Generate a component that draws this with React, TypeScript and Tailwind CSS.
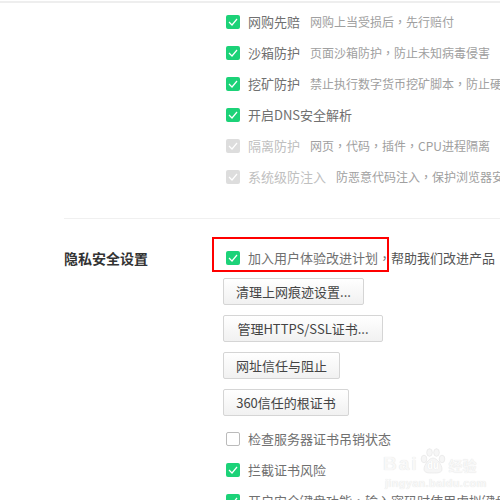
import type { ReactNode } from "react"

const FONT = "[font-family:'Noto_Sans_CJK_SC','Liberation_Sans',sans-serif]"

// the full-width comma sits centred in the reference, which the TC cut does
function Commas({ text }: { text: string }) {
  const parts = text.split("，")
  return (
    <>
      {parts.map((part, i) => (
        <span key={i}>
          {part}
          {i < parts.length - 1 && <span className="font-['Noto_Sans_CJK_TC']">，</span>}
        </span>
      ))}
    </>
  )
}

function Check({ state }: { state: "on" | "off" | "locked" }) {
  if (state === "off") {
    return <span className="h-[14px] w-[14px] shrink-0 rounded-[2px] border border-[#bbbbbb] bg-white" />
  }
  return (
    <span
      className={`flex h-[14px] w-[14px] shrink-0 items-center justify-center rounded-[2px] ${
        state === "on" ? "bg-[#1cd278]" : "bg-[#dddddd]"
      }`}
    >
      <svg width="10" height="8" viewBox="0 0 10 8" fill="none">
        <path d="M1 4l3 3 5-6" stroke="white" strokeWidth="1.2" />
      </svg>
    </span>
  )
}

function Option({
  state = "on",
  label,
  note,
}: {
  state?: "on" | "off" | "locked"
  label: string
  note?: string
}) {
  const locked = state === "locked"
  return (
    <div className="mb-px flex h-[30px] items-center whitespace-nowrap">
      <Check state={state} />
      <span className={`ml-2 ${locked ? "text-[#c0c0c0]" : "text-[#707070]"}`}>
        <Commas text={label} />
      </span>
      {note && (
        <span className="ml-[10px] text-[12px] text-[#a0a0a0]">
          <Commas text={note} />
        </span>
      )}
    </div>
  )
}

function ActionButton({ width, children }: { width: string; children: ReactNode }) {
  return (
    <button
      className={`-ml-[3px] mb-[10px] block h-[27px] rounded-[2px] border border-[#d5d5d5] bg-gradient-to-b from-white to-[#f1f1f1] text-center text-[#444444] ${width}`}
    >
      {children}
    </button>
  )
}

function Watermark() {
  return (
    <div className="absolute left-[383px] top-[447px] text-[#f8f8f8] [text-shadow:0_0_1px_#dcdcdc]">
      <div className="flex h-[27px] items-end">
        <span className="font-['Liberation_Sans'] text-[19px] leading-[20px] font-bold tracking-[2px]">Bai</span>
        <svg className="ml-px" width="26" height="26" viewBox="0 0 26 26" fill="#f6f6f6" stroke="#e6e6e6" strokeWidth="0.7">
          <ellipse cx="4" cy="11" rx="2.8" ry="3.8" />
          <ellipse cx="9.5" cy="4.5" rx="2.8" ry="3.8" />
          <ellipse cx="16.5" cy="4.5" rx="2.8" ry="3.8" />
          <ellipse cx="22" cy="11" rx="2.8" ry="3.8" />
          <path d="M13 10c4 0 9 7 9 11 0 4-4 4-9 4s-9 0-9-4c0-4 5-11 9-11z" />
          <text x="13" y="21" textAnchor="middle" fontSize="9" fontWeight="700" fill="#ffffff" stroke="none">
            du
          </text>
        </svg>
        <span className="ml-[3px] text-[14px] leading-[18px] font-bold">经验</span>
      </div>
      <div className="mt-[3px] ml-[2px] font-['Liberation_Sans'] text-[11px] leading-[12px] font-bold tracking-[0.3px]">
        jingyan.baidu.com
      </div>
    </div>
  )
}

export default function App() {
  return (
    <div className={`relative h-[500px] w-[500px] overflow-hidden bg-white text-[13px] leading-[20px] ${FONT}`}>
      <div className="mt-px h-[2px] bg-[#eeeeee]" />

      <div className="pl-[64px]">
        <div className="ml-[162px] pt-[4px]">
          <Option label="网购先赔" note="网购上当受损后，先行赔付" />
          <Option label="沙箱防护" note="页面沙箱防护，防止未知病毒侵害" />
          <Option label="挖矿防护" note="禁止执行数字货币挖矿脚本，防止硬件资源被占用" />
          <Option label="开启DNS安全解析" />
          <Option state="locked" label="隔离防护" note="网页，代码，插件，CPU进程隔离" />
          <Option state="locked" label="系统级防注入" note="防恶意代码注入，保护浏览器安全" />
        </div>

        <div className="mt-[26px] h-px bg-[#f0f0f0]" />

        <div className="mt-6 flex">
          <div className="flex h-[30px] w-[162px] shrink-0 items-center text-[14px] font-bold text-[#333333]">
            隐私安全设置
          </div>
          <div className="min-w-0 flex-1">
            <div className="mb-[5px] flex h-[30px] items-center whitespace-nowrap">
              <Check state="on" />
              <span className="ml-2 text-[#707070]">
                <Commas text="加入用户体验改进计划，" />
              </span>
              <span className="text-[#555555]">帮助我们改进产品</span>
            </div>
            <ActionButton width="w-[141px]">清理上网痕迹设置...</ActionButton>
            <ActionButton width="w-[160px]">管理HTTPS/SSL证书...</ActionButton>
            <ActionButton width="w-[117px]">网址信任与阻止</ActionButton>
            <ActionButton width="w-[126px]">360信任的根证书</ActionButton>
            <div className="-mt-[2px]" />
            <Option state="off" label="检查服务器证书吊销状态" />
            <Option label="拦截证书风险" />
            <Option label="开启安全键盘功能，输入密码时使用虚拟键盘" />
          </div>
        </div>
      </div>

      <div className="absolute left-[212px] top-[237px] h-[35px] w-[177px] border-[2px] border-[#ff0000]" />
      <Watermark />
    </div>
  )
}
